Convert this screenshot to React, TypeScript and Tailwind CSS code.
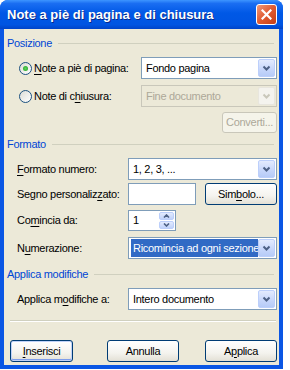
import type { ReactNode } from "react";

function Chevron({ disabled }: { disabled?: boolean }) {
  return (
    <svg width="9" height="6" viewBox="0 0 9 6">
      <polyline
        points="1.5,1.5 4.5,4.5 7.5,1.5"
        fill="none"
        stroke={disabled ? "#c9c7ba" : "#4d6185"}
        strokeWidth="2"
      />
    </svg>
  );
}

function DropBtn({ disabled }: { disabled?: boolean }) {
  return (
    <div
      className={`flex w-[17px] items-center justify-center rounded-[2px] border ${
        disabled
          ? "border-[#e8e6de] bg-[#f4f3ee]"
          : "border-[#bccffb] bg-[linear-gradient(to_bottom,#e3ebfe,#c6d6fb_60%,#b6cbf7)]"
      }`}
    >
      <Chevron disabled={disabled} />
    </div>
  );
}

function Select({
  value,
  width,
  disabled,
  highlight,
}: {
  value: string;
  width: string;
  disabled?: boolean;
  highlight?: boolean;
}) {
  return (
    <div
      className={`flex h-[22px] ${width} items-stretch border p-px ${
        disabled ? "border-[#c9c7ba] bg-[#ece9d8]" : "border-[#7f9db9] bg-white"
      }`}
    >
      <div className="flex flex-1 items-center overflow-hidden px-px">
        <span
          className={`flex h-full flex-1 items-center whitespace-nowrap pl-[2px] ${
            highlight ? "bg-[#316ac5] text-white" : disabled ? "text-[#aca899]" : "text-black"
          }`}
        >
          {value}
        </span>
      </div>
      <DropBtn disabled={disabled} />
    </div>
  );
}

function Btn({
  children,
  width,
  isDefault,
  disabled,
  h = "h-[22px]",
}: {
  children: ReactNode;
  width: string;
  isDefault?: boolean;
  disabled?: boolean;
  h?: string;
}) {
  return (
    <div
      className={`flex ${h} ${width} items-center justify-center rounded-[3px] border ${
        disabled
          ? "border-[#c9c7ba] bg-[#f5f4ea] text-[#aca899]"
          : "border-[#003c74] bg-[linear-gradient(to_bottom,#ffffff,#f4f3ee_60%,#e3e0d5)] text-black"
      } ${isDefault ? "shadow-[inset_0_0_0_1px_#c0d2f8,inset_0_-1px_0_1px_#7e9deb]" : ""}`}
    >
      {children}
    </div>
  );
}

function Radio({ checked }: { checked?: boolean }) {
  return (
    <div className="flex h-[13px] w-[13px] items-center justify-center rounded-full border border-[#1c5180] bg-[linear-gradient(135deg,#dcdcd6,#ffffff)]">
      {checked && (
        <div className="h-[5px] w-[5px] rounded-full bg-[radial-gradient(circle,#5fd35f,#1f9f1f)]" />
      )}
    </div>
  );
}

function Header({ title }: { title: string }) {
  return (
    <div className="flex h-[13px] items-center px-[3px] text-[#0046d5]">
      <span className="whitespace-nowrap">{title}</span>
      <div className="ml-[6px] h-px flex-1 bg-[#d0d0bf]" />
    </div>
  );
}

function U({ children }: { children: ReactNode }) {
  return <span className="underline underline-offset-[2px]">{children}</span>;
}

export default function App() {
  return (
    <div className="font-['Liberation_Sans',sans-serif] text-[11px] leading-none text-black">
      <div className="flex h-[369px] w-[283px] flex-col overflow-hidden rounded-t-[8px] bg-[#0a56e4]">
        {/* title bar */}
        <div className="flex h-[29px] shrink-0 items-center bg-[linear-gradient(to_bottom,#3d95ff_0%,#1a6ef2_12%,#0058e6_45%,#0055e2_85%,#0044c8_100%)] pl-[7px] pr-[6px]">
          <span className="flex-1 whitespace-nowrap text-[13px] font-bold text-white [text-shadow:1px_1px_0_#0a2a8a]">
            Note a piè di pagina e di chiusura
          </span>
          <div className="flex h-[21px] w-[21px] items-center justify-center rounded-[3px] border border-white bg-[linear-gradient(135deg,#f09a7a,#e05a30_50%,#c43e16)]">
            <svg width="11" height="11" viewBox="0 0 11 11">
              <path d="M1.5 1.5 L9.5 9.5 M9.5 1.5 L1.5 9.5" stroke="white" strokeWidth="2.2" strokeLinecap="square" />
            </svg>
          </div>
        </div>

        {/* body */}
        <div className="mx-[4px] mb-[4px] flex flex-1 flex-col bg-[#ece9d8] pr-[2px] tracking-[-0.3px]">
          <div className="mt-[8px]">
            <Header title="Posizione" />
          </div>

          <div className="mt-[7px] flex h-[22px] items-center pl-[15px]">
            <Radio checked />
            <span className="ml-[2px] flex-1">
              <U>N</U>ote a piè di pagina:
            </span>
            <Select value="Fondo pagina" width="w-[136px]" />
          </div>

          <div className="mt-[6px] flex h-[22px] items-center pl-[15px]">
            <Radio />
            <span className="ml-[2px] flex-1">
              Note di c<U>h</U>iusura:
            </span>
            <Select value="Fine documento" width="w-[136px]" disabled />
          </div>

          <div className="mt-[5px] flex justify-end">
            <Btn width="w-[55px]" h="h-[21px]" disabled>
              Converti...
            </Btn>
          </div>

          <div className="mt-[5px]">
            <Header title="Formato" />
          </div>

          <div className="mt-[7px] flex h-[22px] items-center pl-[13px]">
            <span className="flex-1">
              <U>F</U>ormato numero:
            </span>
            <Select value="1, 2, 3, ..." width="w-[149px]" />
          </div>

          <div className="mt-[3px] flex h-[22px] items-center pl-[13px]">
            <span className="flex-1">
              Segno personaliz<U>z</U>ato:
            </span>
            <div className="h-[22px] w-[68px] border border-[#7f9db9] bg-white" />
            <div className="ml-[9px]">
              <Btn width="w-[72px]">
                Sim<U>b</U>olo...
              </Btn>
            </div>
          </div>

          <div className="mt-[5px] flex h-[21px] items-center pl-[13px]">
            <span className="w-[111px]">
              Co<U>m</U>incia da:
            </span>
            <div className="flex h-[21px] w-[48px] items-stretch border border-[#7f9db9] bg-white p-px">
              <span className="flex flex-1 items-center pl-[3px]">1</span>
              <div className="flex w-[15px] flex-col gap-px">
                <div className="flex flex-1 items-center justify-center rounded-[2px] border border-[#bccffb] bg-[linear-gradient(to_bottom,#e3ebfe,#c0d2fa)]">
                  <svg width="7" height="4" viewBox="0 0 7 4">
                    <polyline points="1,3.5 3.5,1 6,3.5" fill="none" stroke="#4d6185" strokeWidth="1.6" />
                  </svg>
                </div>
                <div className="flex flex-1 items-center justify-center rounded-[2px] border border-[#bccffb] bg-[linear-gradient(to_bottom,#e3ebfe,#c0d2fa)]">
                  <svg width="7" height="4" viewBox="0 0 7 4">
                    <polyline points="1,0.5 3.5,3 6,0.5" fill="none" stroke="#4d6185" strokeWidth="1.6" />
                  </svg>
                </div>
              </div>
            </div>
          </div>

          <div className="mt-[6px] flex h-[22px] items-center pl-[13px]">
            <span className="flex-1">
              N<U>u</U>merazione:
            </span>
            <Select value="Ricomincia ad ogni sezione" width="w-[149px]" highlight />
          </div>

          <div className="mt-[9px]">
            <Header title="Applica modifiche" />
          </div>

          <div className="mt-[7px] flex h-[22px] items-center pl-[13px]">
            <span className="flex-1">
              Applica m<U>o</U>difiche a:
            </span>
            <Select value="Intero documento" width="w-[149px]" />
          </div>

          <div className="ml-[6px] mr-[1px] mt-[10px] h-px bg-[#d0d0bf] shadow-[0_1px_0_#ffffff]" />

          <div className="mt-[19px] flex items-center pl-[6px]">
            <Btn width="w-[63px]" isDefault>
              <U>I</U>nserisci
            </Btn>
            <div className="ml-[34px]">
              <Btn width="w-[72px]">Annulla</Btn>
            </div>
            <div className="ml-[26px]">
              <Btn width="w-[72px]">
                A<U>p</U>plica
              </Btn>
            </div>
          </div>
        </div>
      </div>
    </div>
  );
}
